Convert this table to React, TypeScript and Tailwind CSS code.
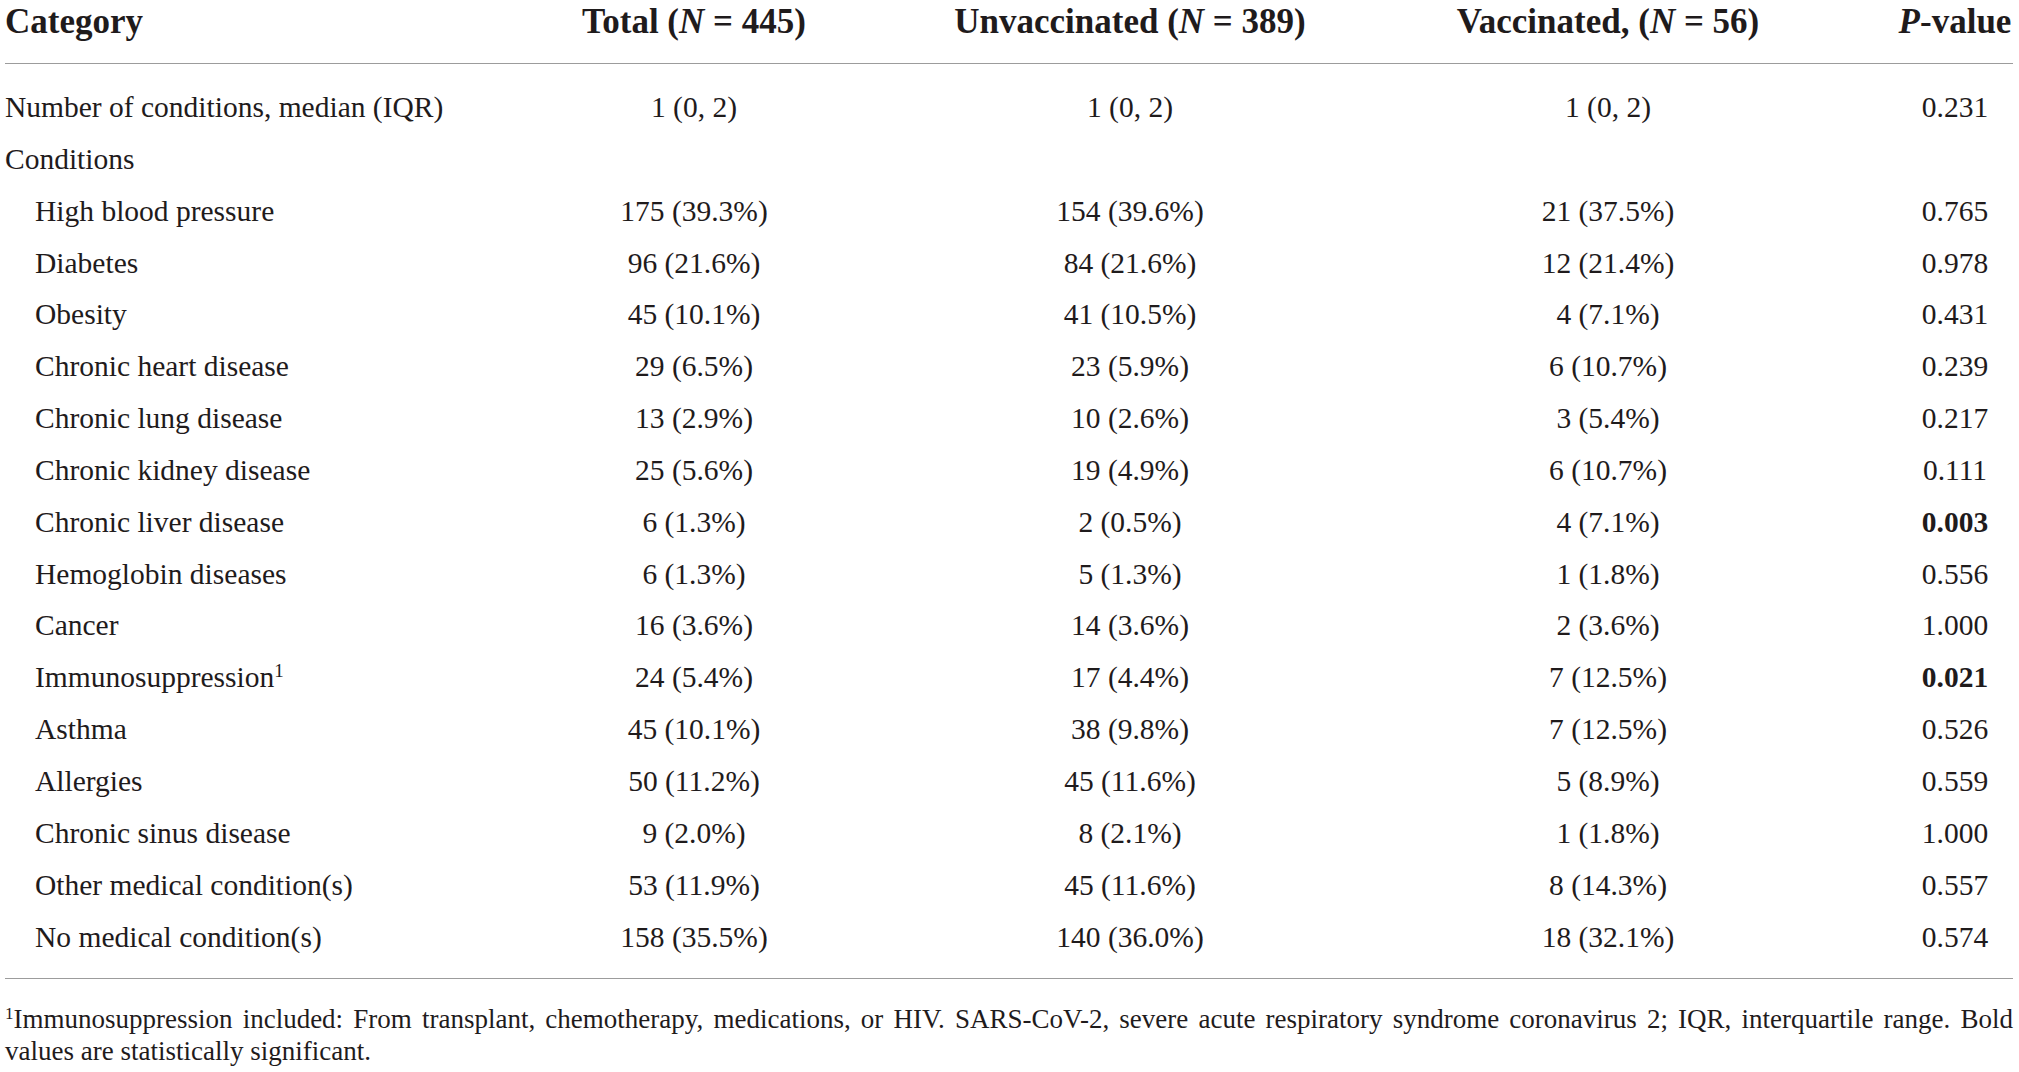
import React from 'react';

const rows = [
  { label: 'High blood pressure', total: '175 (39.3%)', unvax: '154 (39.6%)', vax: '21 (37.5%)', p: '0.765' },
  { label: 'Diabetes', total: '96 (21.6%)', unvax: '84 (21.6%)', vax: '12 (21.4%)', p: '0.978' },
  { label: 'Obesity', total: '45 (10.1%)', unvax: '41 (10.5%)', vax: '4 (7.1%)', p: '0.431' },
  { label: 'Chronic heart disease', total: '29 (6.5%)', unvax: '23 (5.9%)', vax: '6 (10.7%)', p: '0.239' },
  { label: 'Chronic lung disease', total: '13 (2.9%)', unvax: '10 (2.6%)', vax: '3 (5.4%)', p: '0.217' },
  { label: 'Chronic kidney disease', total: '25 (5.6%)', unvax: '19 (4.9%)', vax: '6 (10.7%)', p: '0.111' },
  { label: 'Chronic liver disease', total: '6 (1.3%)', unvax: '2 (0.5%)', vax: '4 (7.1%)', p: '0.003', bold: true },
  { label: 'Hemoglobin diseases', total: '6 (1.3%)', unvax: '5 (1.3%)', vax: '1 (1.8%)', p: '0.556' },
  { label: 'Cancer', total: '16 (3.6%)', unvax: '14 (3.6%)', vax: '2 (3.6%)', p: '1.000' },
  { label: 'Immunosuppression', sup: '1', total: '24 (5.4%)', unvax: '17 (4.4%)', vax: '7 (12.5%)', p: '0.021', bold: true },
  { label: 'Asthma', total: '45 (10.1%)', unvax: '38 (9.8%)', vax: '7 (12.5%)', p: '0.526' },
  { label: 'Allergies', total: '50 (11.2%)', unvax: '45 (11.6%)', vax: '5 (8.9%)', p: '0.559' },
  { label: 'Chronic sinus disease', total: '9 (2.0%)', unvax: '8 (2.1%)', vax: '1 (1.8%)', p: '1.000' },
  { label: 'Other medical condition(s)', total: '53 (11.9%)', unvax: '45 (11.6%)', vax: '8 (14.3%)', p: '0.557' },
  { label: 'No medical condition(s)', total: '158 (35.5%)', unvax: '140 (36.0%)', vax: '18 (32.1%)', p: '0.574' },
];

const grid = 'grid grid-cols-[442px_494px_378px_578px_116px]';
const rowCls = `${grid} h-[51.85px] leading-[51.85px] text-[29.5px] whitespace-nowrap`;

export default function App() {
  return (
    <div className="w-[2019px] h-[1072px] bg-white text-[#1f1b1c] font-['Liberation_Serif',serif] overflow-hidden">
      <div className="pl-[5px] w-[2013px]">
        {/* header */}
        <div className={`${grid} h-[64px] border-b border-[#9c9c9c] leading-[44px] text-[35px] font-bold whitespace-nowrap`}>
          <div>Category</div>
          <div className="text-center">Total (<i>N</i> = 445)</div>
          <div className="text-center">Unvaccinated (<i>N</i> = 389)</div>
          <div className="text-center">Vaccinated, (<i>N</i> = 56)</div>
          <div className="text-center"><i>P</i>-value</div>
        </div>

        {/* body */}
        <div className="pt-[18px] pb-[15px] border-b border-[#9c9c9c]">
          <div className={rowCls}>
            <div>Number of conditions, median (IQR)</div>
            <div className="text-center">1 (0, 2)</div>
            <div className="text-center">1 (0, 2)</div>
            <div className="text-center">1 (0, 2)</div>
            <div className="text-center">0.231</div>
          </div>
          <div className={rowCls}>
            <div>Conditions</div>
            <div />
            <div />
            <div />
            <div />
          </div>
          {rows.map((r) => (
            <div key={r.label} className={rowCls}>
              <div className="pl-[30px]">
                {r.label}
                {r.sup && <span className="text-[19px] align-[10px] leading-none">{r.sup}</span>}
              </div>
              <div className="text-center">{r.total}</div>
              <div className="text-center">{r.unvax}</div>
              <div className="text-center">{r.vax}</div>
              <div className={r.bold ? 'text-center font-bold' : 'text-center'}>{r.p}</div>
            </div>
          ))}
        </div>

        {/* footnote */}
        <div className="mt-[24px] text-[27px] leading-[32px]">
          <p className="text-justify [text-align-last:justify] whitespace-nowrap">
            <span className="text-[17px] align-[9px] leading-none">1</span>Immunosuppression included: From transplant, chemotherapy, medications, or HIV. SARS-CoV-2, severe acute respiratory syndrome coronavirus 2; IQR, interquartile range. Bold
          </p>
          <p>values are statistically significant.</p>
        </div>
      </div>
    </div>
  );
}
